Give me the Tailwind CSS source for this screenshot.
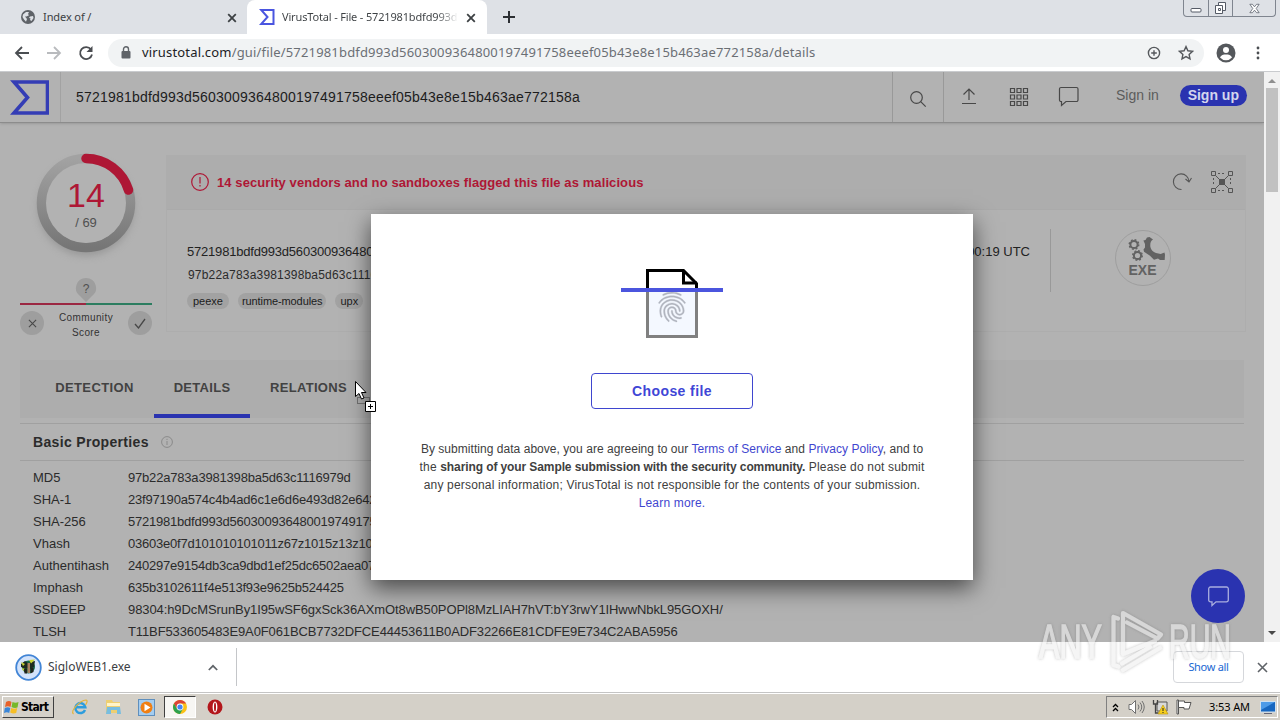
<!DOCTYPE html>
<html lang="en">
  <head>
    <meta charset="UTF-8" />
    <meta name="viewport" content="width=device-width, initial-scale=1.0" />
    <title>VirusTotal - File</title>
    <script src="https://cdn.jsdelivr.net/npm/@tailwindcss/browser@4"></script>
  </head>
  <body class="relative h-[720px] w-[1280px] overflow-hidden flex flex-col bg-white font-['Liberation_Sans',sans-serif] text-[13px] text-[#2b2b2b]">
    <!-- Tab strip -->
    <div class="flex h-[34px] shrink-0 bg-[#dee1e6] font-['Noto_Sans',sans-serif] text-[12px] text-[#3c4043]">
      <div class="flex h-full w-[247px] items-center pl-[21px] pr-[9px]">
        <svg class="mr-[8px]" width="14" height="14" viewBox="0 0 14 14"><circle cx="7" cy="7" r="7" fill="#5f6368" /><path d="M2 4.500 5 2h3L7 4l1 1.200-2.500 1.300H4L6 9l-1 2.800L3 9.500 1.500 7zM9 6.500l3-.5.5 2-2 3-1.500-1 .5-1.500-1.500-.8z" fill="#dee1e6" /></svg>
        <span class="text-[11px] tracking-[-0.1px]">Index of /</span>
        <svg class="ml-auto mt-px" width="12" height="12" viewBox="0 0 12 12" stroke="#3c4043" stroke-width="1.800"><path d="m2.200 2.200 7.600 7.600M9.800 2.200 2.200 9.800" /></svg>
      </div>
      <div class="flex h-full w-[240px] items-center rounded-t-lg bg-white pl-[12px] pr-[10px]">
        <svg class="mr-[7px]" width="16" height="16" viewBox="0 0 16 16" fill="none" stroke="#4a55e0" stroke-width="2"><path d="M2.200 1H14.500V15H2.200L8.500 8z" /></svg>
        <span class="w-[176px] overflow-hidden whitespace-nowrap bg-linear-to-r from-[#3c4043] from-88% to-white bg-clip-text text-[11px] tracking-[-0.16px] text-transparent">VirusTotal - File - 5721981bdfd993d5</span>
        <svg class="ml-auto mt-px shrink-0" width="12" height="12" viewBox="0 0 12 12" stroke="#3c4043" stroke-width="1.800"><path d="m2.200 2.200 7.600 7.600M9.800 2.200 2.200 9.800" /></svg>
      </div>
      <svg class="ml-[16px] mt-[11px]" width="12" height="12" viewBox="0 0 12 12" stroke="#2c2f33" stroke-width="2"><path d="M6 0v12M0 6h12" /></svg>
      <!-- Window buttons -->
      <div class="ml-auto mr-[4px] flex h-[17px] w-[93px] rounded-b-[4px] border border-t-0 border-[#7f858f]">
        <div class="flex w-[25px] items-center justify-center border-r border-[#7f858f]">
          <svg width="12" height="14" viewBox="0 0 12 14"><rect x="1" y="7.500" width="10" height="3.500" rx="1" fill="#fff" stroke="#555b66" /></svg>
        </div>
        <div class="flex w-[24px] items-center justify-center border-r border-[#7f858f]">
          <svg width="13" height="14" viewBox="0 0 13 14" fill="#fff" stroke="#555b66"><path d="M4.500 1.500h7v8h-7z" /><path d="M1.500 4.500h7v8h-7z" /><path d="M4.500 7.500h2v2h-2z" /></svg>
        </div>
        <div class="flex flex-1 items-center justify-center">
          <svg width="11" height="11" viewBox="0 0 13 12"><path d="M1 1h3l2.500 3L9 1h3L8.500 6l3.500 5H9L6.500 8 4 11H1l3.500-5z" fill="#fff" stroke="#555b66" stroke-width=".9" /></svg>
        </div>
      </div>
    </div>

    <!-- Address bar -->
    <div class="flex h-[38px] shrink-0 items-center border-b border-[#c9cbce] bg-white pr-[15px]">
      <svg class="ml-[14px]" width="16" height="16" viewBox="0 0 16 16" fill="none" stroke="#4a4d51" stroke-width="1.800"><path d="M15 8H2.500M8 2 2 8l6 6" /></svg>
      <svg class="ml-[16px]" width="16" height="16" viewBox="0 0 16 16" fill="none" stroke="#b9bbbe" stroke-width="1.800"><path d="M1 8h12.500M8 2l6 6-6 6" /></svg>
      <svg class="ml-[16px]" width="16" height="16" viewBox="0 0 16 16"><path d="M13 4.500A6 6 0 1 0 14 9.500" fill="none" stroke="#4a4d51" stroke-width="1.800" /><path d="M14.500 1v6h-6z" fill="#4a4d51" /></svg>
      <div class="ml-[14px] flex h-[28px] w-[1096px] items-center rounded-full bg-[#f1f3f4] pl-[13px] pr-[10px]">
        <svg width="10" height="13" viewBox="0 0 10 13"><rect x="0.500" y="5" width="9" height="7.500" rx="1" fill="#5f6368" /><path d="M2.500 5V3.300a2.500 2.500 0 0 1 5 0V5" fill="none" stroke="#5f6368" stroke-width="1.400" /></svg>
        <span class="ml-[11px] whitespace-nowrap font-['Noto_Sans',sans-serif] text-[13px] tracking-[0.17px] text-[#6b6f74]"><span class="text-[#202124]">virustotal.com</span>/gui/file/5721981bdfd993d5603009364800197491758eeef05b43e8e15b463ae772158a/details</span>
        <svg class="ml-auto" width="14" height="14" viewBox="0 0 14 14" fill="none" stroke="#55585c" stroke-width="1.400"><circle cx="7" cy="7" r="5.600" /><path d="M7 4.200v5.600M4.200 7h5.600" /></svg>
        <svg class="ml-[17px]" width="16" height="16" viewBox="0 0 16 16" fill="none" stroke="#55585c" stroke-width="1.400"><path d="m8 1.600 1.900 4.200 4.600.5-3.400 3.100.9 4.500L8 11.600l-4 2.300.9-4.500L1.500 6.300l4.600-.5z" /></svg>
      </div>
      <svg class="ml-[12px]" width="20" height="20" viewBox="0 0 20 20"><circle cx="10" cy="10" r="9.500" fill="#55585c" /><circle cx="10" cy="7" r="3" fill="#fff" /><path d="M4 14.500c1-2.600 3.500-3 6-3s5 .4 6 3a8 8 0 0 1-12 0z" fill="#fff" /></svg>
      <svg class="ml-auto mr-[5px]" width="4" height="16" viewBox="0 0 4 16" fill="#4a4d51"><circle cx="2" cy="3" r="1.400" /><circle cx="2" cy="8" r="1.400" /><circle cx="2" cy="13" r="1.400" /></svg>
    </div>

    <!-- Page -->
    <div class="flex h-[570px] shrink-0 bg-[#b2b2b2]">
      <div class="flex h-full w-[1264px] flex-col overflow-hidden">
        <header class="flex h-[51px] shrink-0 items-stretch border-b border-[#8c8c8c] shadow-sm">
          <div class="flex w-[61px] items-center border-r border-[#a2a2a2] pl-[10px]">
            <svg width="39" height="35" viewBox="0 0 39 35" fill="none" stroke="#343db5" stroke-width="3.600"><path d="M4 2H37.500V33H4L17.500 17.500z" /></svg>
          </div>
          <div class="flex flex-1 items-center pl-[15px] text-[14px] tracking-[0.21px] text-[#1c1c1c]">5721981bdfd993d5603009364800197491758eeef05b43e8e15b463ae772158a</div>
          <div class="flex w-[52px] items-center justify-center border-x border-[#999] pt-[3px]">
            <svg width="18" height="18" viewBox="0 0 18 18" fill="none" stroke="#484848" stroke-width="1.200"><circle cx="7.500" cy="7.500" r="5.800" /><path d="m11.700 11.700 5 5" /></svg>
          </div>
          <div class="flex w-[320px] items-center pb-[3px] text-[14px]">
            <svg class="ml-[16px]" width="18" height="18" viewBox="0 0 18 18" fill="none" stroke="#484848" stroke-width="1.200"><path d="M9 13V2M3.500 7.500 9 2l5.500 5.500M2 16.500h14" /></svg>
            <svg class="ml-[31px] mt-[2px]" width="20" height="20" viewBox="0 0 20 20" fill="none" stroke="#484848" stroke-width="1.200"><path d="M1.500 1.500h4v4h-4zM8 1.500h4v4H8zM14.500 1.500h4v4h-4zM1.500 8h4v4h-4zM8 8h4v4H8zM14.500 8h4v4h-4zM1.500 14.500h4v4h-4zM8 14.500h4v4H8zM14.500 14.500h4v4h-4z" /></svg>
            <svg class="ml-[29px] mt-px" width="21" height="21" viewBox="0 0 21 21" fill="none" stroke="#484848" stroke-width="1.200"><path d="M3 1.500h15.500a1.500 1.500 0 0 1 1.500 1.500v11a1.500 1.500 0 0 1-1.500 1.500H8L3.500 19.500v-4H3A1.500 1.500 0 0 1 1.500 14V3A1.500 1.500 0 0 1 3 1.500z" /></svg>
            <span class="ml-[37px] text-[#5c5c5c]">Sign in</span>
            <span class="ml-[21px] flex h-[21px] w-[67px] items-center justify-center rounded-full bg-[#2a33b0] font-bold text-[#d4d6ee]">Sign up</span>
          </div>
        </header>

        <!-- Score and summary -->
        <section class="flex shrink-0 pl-[20px] pt-[29px]">
          <div class="flex w-[132px] flex-col items-center">
            <svg width="132" height="116" viewBox="0 0 132 116" class="shrink-0">
              <defs>
                <linearGradient id="ring" x1="0" y1="0" x2="0" y2="1"><stop offset="0" stop-color="#a2a2a2" /><stop offset="1" stop-color="#767676" /></linearGradient>
                <filter id="soft" x="-30%" y="-30%" width="160%" height="160%"><feGaussianBlur stdDeviation="4" /></filter>
              </defs>
              <circle cx="66" cy="56" r="47" fill="#808080" opacity=".6" filter="url(#soft)" />
              <circle cx="66" cy="51" r="44.500" fill="none" stroke="url(#ring)" stroke-width="9.500" />
              <circle cx="66" cy="51" r="40" fill="#b2b2b2" />
              <path d="M66 6.500A44.500 44.500 0 0 1 108.500 38" fill="none" stroke="#ae1735" stroke-width="9.500" stroke-linecap="round" />
              <text x="66" y="54.500" text-anchor="middle" font-size="34" fill="#ae1735">14</text>
              <text x="66" y="75" text-anchor="middle" font-size="13" fill="#505050">/ 69</text>
            </svg>
            <div class="relative mt-[9px] flex h-[28px] w-full items-end">
              <div class="h-[2px] w-1/2 bg-[#9b2742]"></div>
              <div class="h-[2px] w-1/2 bg-[#2c7d60]"></div>
              <svg class="absolute left-[55px] top-0" width="22" height="28" viewBox="0 0 22 28"><path d="M11 1a10 10 0 0 1 6 18l-6 6-6-6A10 10 0 0 1 11 1z" fill="#9e9e9e" /><text x="11" y="15.500" text-anchor="middle" font-size="12" fill="#505050">?</text></svg>
            </div>
            <div class="mt-[6px] flex w-full items-start justify-between">
              <span class="flex size-[24px] items-center justify-center rounded-full bg-[#9e9e9e]"><svg width="9" height="9" viewBox="0 0 10 10" stroke="#484848" stroke-width="1.200"><path d="m1 1 8 8M9 1 1 9" /></svg></span>
              <span class="-mt-px text-center text-[10px] leading-[15px] tracking-[0.4px] text-[#333]">Community<br />Score</span>
              <span class="flex size-[24px] items-center justify-center rounded-full bg-[#9e9e9e]"><svg width="12" height="11" viewBox="0 0 12 11" fill="none" stroke="#484848" stroke-width="1.300"><path d="m1 6 3.500 4L11 1" /></svg></span>
            </div>
          </div>

          <div class="ml-[14px] mt-[3px] h-[177px] w-[1080px] border border-[#adadad]">
            <div class="flex h-[54px] items-center border-b border-[#aaa] bg-[#adadad] pb-px pl-[24px] pr-[11px]">
              <svg width="18" height="18" viewBox="0 0 18 18" fill="none" stroke="#ae1735" stroke-width="1.200"><circle cx="9" cy="9" r="8.300" /><path d="M9 4v6.500M9 12v1.600" /></svg>
              <span class="ml-[8px] pt-[2px] text-[13px] font-bold tracking-[0.09px] text-[#ae1735]">14 security vendors and no sandboxes flagged this file as malicious</span>
              <svg class="ml-auto" width="20" height="18" viewBox="0 0 20 18" fill="none" stroke="#555" stroke-width="1.100"><path d="M9.500 16.500A7.800 7.800 0 1 1 17 8.500M13.500 6l3.500 3 2.500-4" /></svg>
              <svg class="ml-[18px]" width="24" height="24" viewBox="0 0 24 24" fill="none" stroke="#555"><path d="M1.500 1.500h4v4h-4zM18.500 1.500h4v4h-4zM1.500 18.500h4v4h-4zM18.500 18.500h4v4h-4zM5.500 5.500l13 13M18.500 5.500l-13 13" /><path d="M9.500 9.500h5v5h-5z" fill="#555" /><path d="M8 3.500h8M8 20.500h8M3.500 8v8M20.500 8v8" stroke-dasharray="2 2" /></svg>
            </div>
            <div class="flex h-[121px]">
              <div class="whitespace-nowrap pl-[20px] pt-[32px]">
                <p class="text-[13px] leading-[20px] tracking-[-0.2px] text-[#222]">5721981bdfd993d5603009364800197491758eeef05b43e8e15b463ae772158a</p>
                <p class="mt-[3px] pl-px text-[12px] leading-[20px] tracking-[0.18px]">97b22a783a3981398ba5d63c1116979d.virus</p>
                <div class="mt-[8px] flex gap-[9px] text-[11px] leading-[16px] text-[#1c1c1c]">
                  <span class="rounded-full bg-[#a2a2a2] px-[6px]">peexe</span>
                  <span class="rounded-full bg-[#a2a2a2] px-[4px] tracking-[-0.1px]">runtime-modules</span>
                  <span class="rounded-full bg-[#a2a2a2] px-[5px]">upx</span>
                </div>
              </div>
              <div class="ml-auto flex pt-[19px]">
                <span class="pr-[20px] pt-[13px] leading-[20px] text-[#222]">2021-08-03 19:00:19 UTC</span>
                <div class="h-[63px] border-l border-[#999]"></div>
                <svg class="ml-[63px] mr-[73px]" width="58" height="58" viewBox="0 0 58 58">
                  <circle cx="29" cy="29" r="27.500" fill="none" stroke="#9e9e9e" />
                  <g fill="none" stroke="#626262"><circle cx="20" cy="15.500" r="3.600" stroke-width="2" /><circle cx="23.500" cy="26.500" r="3.600" stroke-width="2" /><circle cx="20" cy="15.500" r="4.800" stroke-width="1.400" stroke-dasharray="1.900 1.870" /><circle cx="23.500" cy="26.500" r="4.800" stroke-width="1.400" stroke-dasharray="1.900 1.870" /></g>
                  <path d="M29.400 11.500 31.500 11 33 8.500 35.500 8 39 10.500C36.500 11.500 36 15 36.400 18C37 21 39 23 42 24L46.700 25 50.400 23.500 51 25.500 50.700 31H46L44 29.500 40 30.700 36 26.700 30 22.700 29.500 20.500 31 18.500 31 15z" fill="#626262" />
                  <text x="28.500" y="46" text-anchor="middle" font-size="14" font-weight="bold" fill="#626262">EXE</text>
                </svg>
              </div>
            </div>
          </div>
        </section>

        <!-- Tabs -->
        <nav class="ml-[20px] mt-[20px] flex h-[58px] w-[1224px] shrink-0 bg-[#adadad] pl-[15px] text-[13px] font-bold text-[#424242]">
          <div class="w-[119px] pt-[18px] text-center leading-[20px] tracking-[0.4px]">DETECTION</div>
          <div class="w-[96px] border-b-4 border-[#2a33b0] pt-[18px] text-center leading-[20px] tracking-[0.3px]">DETAILS</div>
          <div class="w-[117px] pt-[18px] text-center leading-[20px] tracking-[0.3px]">RELATIONS</div>
        </nav>

        <!-- Basic properties -->
        <section class="ml-[20px] mt-[5px] w-[1224px] border-t border-[#a0a0a0]">
          <h2 class="flex h-[37px] items-center border-b border-[#a0a0a0] pl-[13px] text-[14px] font-bold tracking-[0.33px]">
            Basic Properties
            <svg class="ml-[12px]" width="12" height="12" viewBox="0 0 12 12" fill="none" stroke="#8a8a8a"><circle cx="6" cy="6" r="5.400" /><path d="M6 5v4M6 2.800v1.200" /></svg>
          </h2>
          <dl class="grid grid-cols-[95px_1fr] whitespace-nowrap pl-[13px] pt-[6px] leading-[22px]">
            <dt>MD5</dt><dd class="tracking-[-0.19px]">97b22a783a3981398ba5d63c1116979d</dd>
            <dt>SHA-1</dt><dd class="tracking-[-0.19px]">23f97190a574c4b4ad6c1e6d6e493d82e642f1a0</dd>
            <dt>SHA-256</dt><dd class="tracking-[-0.23px]">5721981bdfd993d5603009364800197491758eeef05</dd>
            <dt>Vhash</dt><dd class="tracking-[-0.23px]">03603e0f7d101010101011z67z1015z13z101</dd>
            <dt>Authentihash</dt><dd class="tracking-[-0.23px]">240297e9154db3ca9dbd1ef25dc6502aea07</dd>
            <dt>Imphash</dt><dd class="tracking-[-0.23px]">635b3102611f4e513f93e9625b524425</dd>
            <dt>SSDEEP</dt><dd class="tracking-[-0.09px]">98304:h9DcMSrunBy1I95wSF6gxSck36AXmOt8wB50POPl8MzLIAH7hVT:bY3rwY1IHwwNbkL95GOXH/</dd>
            <dt>TLSH</dt><dd class="tracking-[-0.12px]">T11BF533605483E9A0F061BCB7732DFCE44453611B0ADF32266E81CDFE9E734C2ABA5956</dd>
          </dl>
        </section>
      </div>

      <!-- Scrollbar -->
      <div class="flex w-[16px] flex-col items-center justify-between bg-[#f1f1f1]">
        <div class="flex flex-col items-center">
          <svg width="16" height="16" viewBox="0 0 16 16"><path d="m4 11 4-4 4 4z" fill="#8f8f8f" /></svg>
          <div class="h-[104px] w-[12px] bg-[#c1c1c1]"></div>
        </div>
        <svg width="16" height="18" viewBox="0 0 16 18"><path d="m4 7 4 4 4-4z" fill="#484848" /></svg>
      </div>
    </div>

    <!-- Downloads bar -->
    <div class="flex h-[51px] shrink-0 items-center border-b border-[#c4c4c4] bg-white font-['Noto_Sans',sans-serif]">
      <svg class="ml-[15px]" width="27" height="27" viewBox="0 0 27 27"><circle cx="13.500" cy="13.500" r="12.300" fill="#d3e3fb" stroke="#4285d6" stroke-width="1.800" /><circle cx="13.500" cy="13" r="6.500" fill="#176a4a" /><path d="M6 10l4-3 4 3v3l-3 2-5-2zM15 8l5-1-1 6-4 2z" fill="#1d2b20" /><path d="m6 8 4 2-2 2zM14 6l6-.5-4 4zM7 14l3 1-2 2z" fill="#c9d532" /><path d="M12.500 9h2.500v10h-2.500z" fill="#aa8260" /><path d="M9 15h3v4.500H9.500zM15.500 14h3v4l-3 1.500z" fill="#20231c" /></svg>
      <span class="ml-[6px] w-[160px] text-[12px] text-[#3c4043]">SigloWEB1.exe</span>
      <svg width="10" height="7" viewBox="0 0 10 7" fill="none" stroke="#5f6368" stroke-width="1.700"><path d="m.8 6 4.200-4.200L9.200 6" /></svg>
      <div class="ml-[18px] h-[38px] border-l border-[#c4c6c9]"></div>
      <div class="ml-auto flex h-[32px] w-[71px] items-center justify-center rounded-[4px] border border-[#d5d7db] text-[11px] tracking-[-0.3px] text-[#1967d2]">Show all</div>
      <svg class="ml-[13px] mr-[12px]" width="11" height="11" viewBox="0 0 11 11" stroke="#5f6368" stroke-width="1.600"><path d="m1 1 9 9M10 1l-9 9" /></svg>
    </div>

    <!-- Taskbar -->
    <div class="flex h-[27px] shrink-0 items-center border-t border-white bg-[#d4d0c8] pl-[2px] font-['DejaVu_Sans_Condensed','DejaVu_Sans',sans-serif] text-black">
      <div class="flex h-[22px] w-[52px] items-center border border-b-[#404040] border-l-white border-r-[#404040] border-t-white pl-px text-[12px] font-bold tracking-[-0.7px]">
        <svg class="mr-[2px] shrink-0" width="15" height="15" viewBox="0 0 15 15"><path d="M2 2q3-2 5.500 0L6.500 7Q4 5.500 1 7z" fill="#e8622a" /><path d="M8.500 2q3 1.500 6 0l-1 5.500q-3 1-6-.5z" fill="#76b82a" /><path d="M.8 8q3-1.500 5.500 0L5.200 13Q3 11.500 0 13z" fill="#3a86d8" /><path d="M7.200 8q3 1.500 6 0l-1 5q-3 1-6-.5z" fill="#f6be25" /></svg>
        Start
      </div>
      <!-- Internet Explorer -->
      <svg class="ml-[17px]" width="18" height="18" viewBox="0 0 18 18" fill="none"><path d="M14 12A5 5 0 1 1 14.300 9.200H5" stroke="#2d9ddd" stroke-width="2.500" /><path d="M2.500 16C-1.500 13 9 2.500 15 2c2.500.5 0 4-.5 5" stroke="#e4b43a" stroke-width="1.200" /></svg>
      <!-- Explorer -->
      <svg class="ml-[16px]" width="17" height="16" viewBox="0 0 17 16"><path d="M1 1h6l1 2h7v11H1z" fill="#edcf72" /><path d="M2 4h13v3H2z" fill="#fff4c7" /><path d="M2 8h13l1 7h-4v-4H6v4H1z" fill="#77bde0" /></svg>
      <!-- Media player -->
      <svg class="ml-[16px]" width="17" height="17" viewBox="0 0 17 17"><rect x=".5" y=".5" width="16" height="16" fill="#a4cdf0" stroke="#5f8fbd" /><circle cx="8.500" cy="8.500" r="6" fill="#f07f13" /><path d="m6.500 4.800 6 3.700-6 3.700z" fill="#fff" /></svg>
      <!-- Chrome -->
      <div class="ml-[9px] flex h-[22px] w-[32px] items-center justify-center border border-b-white border-l-[#404040] border-r-white border-t-[#404040] bg-[#f7f6f3]">
        <svg width="14" height="14" viewBox="0 0 14 14"><circle cx="7" cy="7" r="7" fill="#fbc116" /><path d="M.94 3.500A7 7 0 0 1 13.060 3.500L7 3.500 4 8.700z" fill="#db4437" /><path d="M.94 3.500A7 7 0 0 0 7 14L10 8.700 4 8.700z" fill="#2da14e" /><circle cx="7" cy="7" r="3.400" fill="#fff" /><circle cx="7" cy="7" r="2.600" fill="#4285f4" /></svg>
      </div>
      <!-- Opera -->
      <svg class="ml-[11px]" width="16" height="16" viewBox="0 0 16 16"><circle cx="8" cy="8" r="7.500" fill="#b3161b" /><ellipse cx="8" cy="8" rx="2.400" ry="5.500" fill="#fff" /><ellipse cx="8" cy="8" rx="1" ry="4.500" fill="#b3161b" /></svg>
      <!-- Tray -->
      <div class="ml-auto mr-[2px] flex h-[22px] w-[172px] items-center border border-b-white border-l-[#808080] border-r-white border-t-[#808080] pl-[5px] font-['Noto_Sans',sans-serif]">
        <svg width="7" height="9" viewBox="0 0 7 9" fill="none" stroke="#000" stroke-width="1.300"><path d="m1 4 2.500-2.500L6 4M1 8l2.500-2.500L6 8" /></svg>
        <svg class="ml-[9px]" width="17" height="16" viewBox="0 0 17 16" fill="none" stroke="#707070"><path d="M1 5.500h2.500l4-4v13l-4-4H1z" fill="#fff" /><path d="M10 5.500q2 2.500 0 5M12 3.500q3.500 4.500 0 9M14 2q4.500 6 0 12" /></svg>
        <svg class="ml-[7px]" width="17" height="16" viewBox="0 0 17 16"><path d="M5 3h10v9H5z" fill="#d9d9d9" stroke="#555" /><path d="M1.500 1v4h4V1M3.500 5v9h3" fill="none" stroke="#444" stroke-width="1.300" /><path d="m11 6 5 9H6z" fill="#f6cf1c" stroke="#b89208" stroke-width=".6" /><path d="M11 9v3M11 13v1" stroke="#222" /></svg>
        <svg class="ml-[7px]" width="16" height="16" viewBox="0 0 16 16" fill="#fff" stroke="#555"><path d="M1 1h1.500v14H1z" /><path d="M2.500 2h6v1.500H15L13 10H8V8.500H2.500z" /></svg>
        <span class="ml-[17px] whitespace-nowrap text-[11px] tracking-[-0.1px]">3:53 AM</span>
        <svg class="ml-auto mr-px" width="16" height="13" viewBox="0 0 16 13"><rect x=".5" y=".5" width="15" height="10.500" fill="#1767c0" stroke="#cfe0ef" /><path d="M1 1h14L1 9z" fill="#4d9be8" /><path d="M4 12h8v1H4z" fill="#667" /></svg>
      </div>
    </div>

    <!-- Upload dialog -->
    <div class="absolute left-[371px] top-[214px] flex h-[366px] w-[602px] flex-col items-center bg-white pt-[54px] shadow-[0_8px_22px_rgba(0,0,0,0.6)]">
      <svg width="104" height="72" viewBox="0 0 104 72" class="shrink-0">
        <path d="M27.500 21h49v47.500h-49z" fill="#f4f8ff" stroke="#808080" stroke-width="3" />
        <path d="M27.500 22V2.500h36L76.500 15.500v6.500" fill="#fff" stroke="#000" stroke-width="3" />
        <path d="M63.500 2.500v12.500H77" fill="none" stroke="#000" stroke-width="3" />
        <path transform="translate(34 21) scale(1.500)" fill="#b0b4be" stroke="#b0b4be" stroke-width=".2" d="M17.810 4.470c-.08 0-.16-.02-.23-.06C15.660 3.420 14 3 12.010 3c-1.980 0-3.860.47-5.570 1.410-.24.13-.54.04-.68-.2-.13-.24-.04-.55.2-.68C7.820 2.520 9.860 2 12.010 2c2.130 0 3.990.47 6.030 1.520.25.13.34.43.21.67-.09.18-.26.28-.44.28zM3.500 9.720c-.1 0-.2-.03-.29-.09-.23-.16-.28-.47-.12-.7.99-1.400 2.250-2.500 3.750-3.270C9.980 4.040 14 4.030 17.150 5.650c1.500.77 2.760 1.860 3.750 3.250.16.22.11.54-.12.7-.23.16-.54.11-.7-.12-.9-1.260-2.040-2.250-3.390-2.940-2.870-1.470-6.540-1.470-9.400.01-1.360.7-2.500 1.700-3.400 2.960-.08.14-.23.21-.39.21zm6.250 12.070c-.13 0-.26-.05-.35-.15-.87-.87-1.340-1.430-2.010-2.640-.69-1.230-1.050-2.730-1.050-4.340 0-2.970 2.540-5.390 5.660-5.390s5.660 2.420 5.660 5.390c0 .28-.22.5-.5.5s-.5-.22-.5-.5c0-2.420-2.090-4.390-4.660-4.390-2.570 0-4.660 1.970-4.660 4.390 0 1.440.32 2.770.93 3.850.64 1.150 1.080 1.640 1.850 2.420.19.2.19.51 0 .71-.11.1-.24.15-.37.15zm7.170-1.850c-1.190 0-2.240-.3-3.100-.89-1.490-1.010-2.380-2.650-2.380-4.390 0-.28.22-.5.5-.5s.5.22.5.5c0 1.410.72 2.740 1.940 3.560.71.48 1.540.71 2.540.71.24 0 .64-.03 1.040-.1.27-.05.53.13.58.41.05.27-.13.53-.41.58-.57.11-1.070.12-1.210.12zM14.910 22c-.04 0-.09-.01-.13-.02-1.590-.44-2.630-1.030-3.720-2.100-1.400-1.390-2.170-3.240-2.170-5.220 0-1.620 1.380-2.940 3.080-2.940 1.700 0 3.080 1.320 3.080 2.940 0 1.070.93 1.940 2.080 1.940s2.080-.87 2.080-1.940c0-3.770-3.250-6.830-7.250-6.830-2.840 0-5.440 1.580-6.610 4.030-.39.81-.59 1.760-.59 2.800 0 .78.07 2.010.67 3.610.1.26-.03.55-.29.64-.26.1-.55-.04-.64-.29-.49-1.310-.73-2.610-.73-3.960 0-1.200.23-2.290.68-3.240 1.330-2.790 4.280-4.600 7.510-4.600 4.550 0 8.250 3.510 8.250 7.830 0 1.620-1.380 2.940-3.080 2.940s-3.080-1.320-3.080-2.940c0-1.070-.93-1.940-2.080-1.940s-2.080.87-2.080 1.940c0 1.710.66 3.310 1.870 4.510.95.94 1.860 1.460 3.270 1.850.27.07.42.35.35.61-.05.23-.26.38-.47.38z" />
        <path d="M1 20h102v4H1z" fill="#4b55de" />
      </svg>
      <button class="mt-[33px] h-[36px] w-[162px] shrink-0 rounded-[4px] border border-[#3f46cf] text-[14px] font-bold tracking-[0.4px] text-[#3f46d6]">Choose file</button>
      <p class="mt-[31px] whitespace-nowrap text-center text-[12px] leading-[18px] tracking-[0.18px] text-[#404040]">
        <span class="tracking-[0.04px]">By submitting data above, you are agreeing to our <a class="text-[#3f46cf]">Terms of Service</a> and <a class="text-[#3f46cf]">Privacy Policy</a>, and to</span><br />
        the <b class="tracking-[-0.1px]">sharing of your Sample submission with the security community.</b> Please do not submit<br />
        any personal information; VirusTotal is not responsible for the contents of your submission.<br />
        <a class="text-[#3f46cf]">Learn more.</a>
      </p>
    </div>

    <!-- Chat bubble -->
    <div class="absolute left-[1191px] top-[569px] flex size-[54px] items-center justify-center rounded-full bg-[#2a33b0]">
      <svg width="23" height="22" viewBox="0 0 23 22" fill="none" stroke="#a9aedf" stroke-width="1.300"><path d="M3.500 2h16A1.800 1.800 0 0 1 21.300 4v11a1.800 1.800 0 0 1-1.800 1.800H9L5 20.500v-3.700H3.500A1.800 1.800 0 0 1 1.700 15V4A1.800 1.800 0 0 1 3.500 2z" /></svg>
    </div>

    <!-- Drag cursor -->
    <svg class="absolute left-[354px] top-[380px]" width="24" height="34" viewBox="0 0 24 34">
      <path d="M3.500 17.500h12v6h-12z" fill="none" stroke="#333" stroke-dasharray="1 1" />
      <path d="M1.500 1.500v15l3.500-3 2.500 5.500 2.500-1-2.500-5.500h4.500z" fill="#fff" stroke="#000" />
      <path d="M11.500 21.500h10v10h-10z" fill="#fff" stroke="#000" /><path d="M14 26.500h5M16.500 24v5" stroke="#000" />
    </svg>

    <!-- Watermark -->
    <svg class="absolute left-[1030px] top-[600px]" width="212" height="80" viewBox="0 0 212 80">
      <defs><filter id="halo" x="-10%" y="-10%" width="120%" height="120%"><feDropShadow dx="0" dy="0" stdDeviation="1.500" flood-color="#666" flood-opacity=".7" /></filter></defs>
      <g filter="url(#halo)" opacity=".6">
        <g fill="#f0f0f0" stroke="#f0f0f0" stroke-width="1.400" font-family="Liberation Sans" font-size="49">
          <text x="9" y="57.500" textLength="63" lengthAdjust="spacingAndGlyphs">ANY</text>
          <text x="139" y="57.500" textLength="62" lengthAdjust="spacingAndGlyphs">RUN</text>
        </g>
        <path d="M88 18.500 83.500 17V65l5 1.500M93 54V13l38 21.500-3.500 4L97 22.500M93 54l32-13M93 70l37-22M92 63.500l28-16.500" fill="none" stroke="#f0f0f0" stroke-width="4.200" stroke-linejoin="round" stroke-linecap="round" />
      </g>
    </svg>
  </body>
</html>
